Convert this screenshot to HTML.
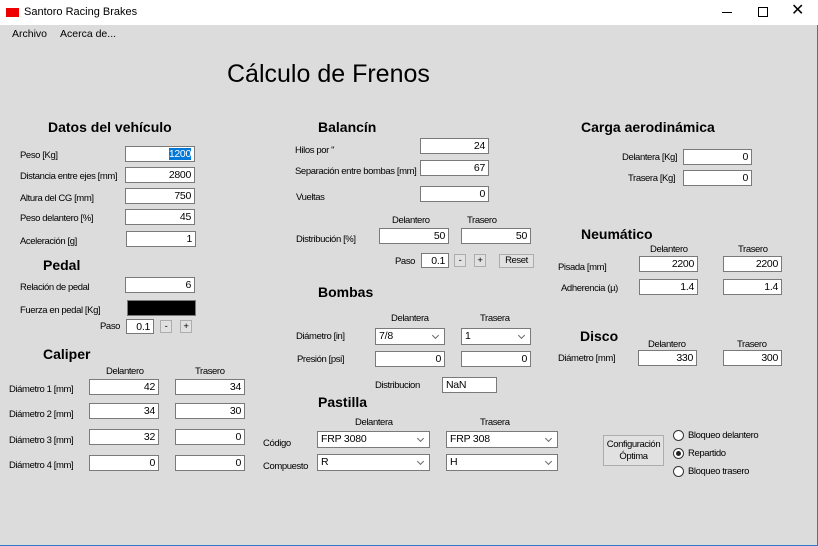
<!DOCTYPE html>
<html><head><meta charset="utf-8"><style>
*{margin:0;padding:0;box-sizing:border-box}
body{width:818px;height:546px;background:#dcdcdc;font-family:"Liberation Sans",sans-serif;font-size:9.5px;color:#000;position:relative;overflow:hidden;letter-spacing:-0.4px}
div,span{position:absolute;white-space:nowrap}
.t{line-height:12px}
.h{font-weight:bold;font-size:14px;letter-spacing:0;line-height:16px}
.i{background:#fff;border:1px solid #7a7a7a;text-align:right;padding-right:3px;font-size:10.5px;line-height:14px;letter-spacing:-0.3px}
.c{background:#fff;border:1px solid #7a7a7a;font-size:10.5px;line-height:15px;padding-left:3px;text-align:left;letter-spacing:-0.2px}
.c::after{content:"";position:absolute;right:6px;top:4px;width:4px;height:4px;border-right:1px solid #666;border-bottom:1px solid #666;transform:rotate(45deg)}
.b{background:#e1e1e1;border:1px solid #adadad;text-align:center;font-size:9.5px;line-height:12px}
.r{width:11px;height:11px;border:1px solid #333;border-radius:50%;background:#fff}
</style></head><body>
<div style="left:0;top:0;width:818px;height:25px;background:#fff"></div>
<div style="left:6px;top:8px;width:13px;height:9px;background:#e00"></div>
<div class="t" style="left:24px;top:6px;font-size:11px;letter-spacing:0">Santoro Racing Brakes</div>
<div style="left:722px;top:12px;width:10px;height:1px;background:#000"></div>
<div style="left:758px;top:7px;width:10px;height:10px;border:1px solid #000"></div>
<div style="left:791px;top:3px;font-size:16px;line-height:16px">✕</div>
<div style="left:817px;top:25px;width:1px;height:521px;background:#2b7bd0"></div>
<div style="left:0;top:545px;width:818px;height:1px;background:#2b7bd0"></div>
<div class="t" style="left:12px;top:28px;font-size:10.5px;letter-spacing:0">Archivo</div>
<div class="t" style="left:60px;top:28px;font-size:10.5px;letter-spacing:0">Acerca de...</div>
<div style="left:227px;top:59px;font-size:25px;line-height:31px;letter-spacing:0">Cálculo de Frenos</div>

<div class="h" style="left:48px;top:119px">Datos del vehículo</div>
<div class="t" style="left:20px;top:150px">Peso [Kg]</div>
<div class="t" style="left:20px;top:171px">Distancia entre ejes [mm]</div>
<div class="t" style="left:20px;top:193px">Altura del CG [mm]</div>
<div class="t" style="left:20px;top:213px">Peso delantero [%]</div>
<div class="t" style="left:20px;top:236px">Aceleración [g]</div>
<div class="i" style="left:125px;top:146px;width:70px;height:16px"><span style="position:static;background:#0078d7;color:#fff">1200</span></div>
<div class="i" style="left:125px;top:167px;width:70px;height:16px">2800</div>
<div class="i" style="left:125px;top:188px;width:70px;height:16px">750</div>
<div class="i" style="left:125px;top:209px;width:70px;height:16px">45</div>
<div class="i" style="left:126px;top:231px;width:70px;height:16px">1</div>

<div class="h" style="left:43px;top:257px">Pedal</div>
<div class="t" style="left:20px;top:282px">Relación de pedal</div>
<div class="i" style="left:125px;top:277px;width:70px;height:16px">6</div>
<div class="t" style="left:20px;top:305px">Fuerza en pedal [Kg]</div>
<div style="left:127px;top:300px;width:69px;height:16px;background:#000;border:1px solid #7a7a7a"></div>
<div class="t" style="left:100px;top:321px">Paso</div>
<div class="i" style="left:126px;top:319px;width:28px;height:15px">0.1</div>
<div class="b" style="left:160px;top:320px;width:12px;height:13px">-</div>
<div class="b" style="left:180px;top:320px;width:12px;height:13px">+</div>

<div class="h" style="left:43px;top:346px">Caliper</div>
<div class="t" style="left:106px;top:366px">Delantero</div>
<div class="t" style="left:195px;top:366px">Trasero</div>
<div class="t" style="left:9px;top:384px">Diámetro 1 [mm]</div>
<div class="t" style="left:9px;top:409px">Diámetro 2 [mm]</div>
<div class="t" style="left:9px;top:435px">Diámetro 3 [mm]</div>
<div class="t" style="left:9px;top:460px">Diámetro 4 [mm]</div>
<div class="i" style="left:89px;top:379px;width:70px;height:16px">42</div>
<div class="i" style="left:175px;top:379px;width:70px;height:16px">34</div>
<div class="i" style="left:89px;top:403px;width:70px;height:16px">34</div>
<div class="i" style="left:175px;top:403px;width:70px;height:16px">30</div>
<div class="i" style="left:89px;top:429px;width:70px;height:16px">32</div>
<div class="i" style="left:175px;top:429px;width:70px;height:16px">0</div>
<div class="i" style="left:89px;top:455px;width:70px;height:16px">0</div>
<div class="i" style="left:175px;top:455px;width:70px;height:16px">0</div>

<div class="h" style="left:318px;top:119px">Balancín</div>
<div class="t" style="left:295px;top:145px">Hilos por "</div>
<div class="t" style="left:295px;top:166px">Separación entre bombas [mm]</div>
<div class="t" style="left:296px;top:192px">Vueltas</div>
<div class="i" style="left:420px;top:138px;width:69px;height:16px">24</div>
<div class="i" style="left:420px;top:160px;width:69px;height:16px">67</div>
<div class="i" style="left:420px;top:186px;width:69px;height:16px">0</div>
<div class="t" style="left:392px;top:215px">Delantero</div>
<div class="t" style="left:467px;top:215px">Trasero</div>
<div class="t" style="left:296px;top:234px">Distribución [%]</div>
<div class="i" style="left:379px;top:228px;width:70px;height:16px">50</div>
<div class="i" style="left:461px;top:228px;width:70px;height:16px">50</div>
<div class="t" style="left:395px;top:256px">Paso</div>
<div class="i" style="left:421px;top:253px;width:28px;height:15px">0.1</div>
<div class="b" style="left:454px;top:254px;width:12px;height:13px">-</div>
<div class="b" style="left:474px;top:254px;width:12px;height:13px">+</div>
<div class="b" style="left:499px;top:254px;width:35px;height:14px">Reset</div>

<div class="h" style="left:318px;top:284px">Bombas</div>
<div class="t" style="left:391px;top:313px">Delantera</div>
<div class="t" style="left:480px;top:313px">Trasera</div>
<div class="t" style="left:296px;top:331px">Diámetro [in]</div>
<div class="c" style="left:375px;top:328px;width:70px;height:17px">7/8</div>
<div class="c" style="left:461px;top:328px;width:70px;height:17px">1</div>
<div class="t" style="left:297px;top:354px">Presión [psi]</div>
<div class="i" style="left:375px;top:351px;width:70px;height:16px">0</div>
<div class="i" style="left:461px;top:351px;width:70px;height:16px">0</div>
<div class="t" style="left:375px;top:380px">Distribucion</div>
<div class="i" style="left:442px;top:377px;width:55px;height:16px;text-align:left;padding-left:3px">NaN</div>

<div class="h" style="left:318px;top:394px">Pastilla</div>
<div class="t" style="left:355px;top:417px">Delantera</div>
<div class="t" style="left:480px;top:417px">Trasera</div>
<div class="t" style="left:263px;top:438px">Código</div>
<div class="t" style="left:263px;top:461px">Compuesto</div>
<div class="c" style="left:317px;top:431px;width:113px;height:17px">FRP 3080</div>
<div class="c" style="left:446px;top:431px;width:112px;height:17px">FRP 308</div>
<div class="c" style="left:317px;top:454px;width:113px;height:17px">R</div>
<div class="c" style="left:446px;top:454px;width:112px;height:17px">H</div>

<div class="h" style="left:581px;top:119px">Carga aerodinámica</div>
<div class="t" style="left:622px;top:152px">Delantera [Kg]</div>
<div class="t" style="left:628px;top:173px">Trasera [Kg]</div>
<div class="i" style="left:683px;top:149px;width:69px;height:16px">0</div>
<div class="i" style="left:683px;top:170px;width:69px;height:16px">0</div>

<div class="h" style="left:581px;top:226px">Neumático</div>
<div class="t" style="left:650px;top:244px">Delantero</div>
<div class="t" style="left:738px;top:244px">Trasero</div>
<div class="t" style="left:558px;top:262px">Pisada [mm]</div>
<div class="t" style="left:561px;top:283px">Adherencia (µ)</div>
<div class="i" style="left:639px;top:256px;width:59px;height:16px">2200</div>
<div class="i" style="left:723px;top:256px;width:59px;height:16px">2200</div>
<div class="i" style="left:639px;top:279px;width:59px;height:16px">1.4</div>
<div class="i" style="left:723px;top:279px;width:59px;height:16px">1.4</div>

<div class="h" style="left:580px;top:328px">Disco</div>
<div class="t" style="left:648px;top:339px">Delantero</div>
<div class="t" style="left:737px;top:339px">Trasero</div>
<div class="t" style="left:558px;top:353px">Diámetro [mm]</div>
<div class="i" style="left:638px;top:350px;width:59px;height:16px">330</div>
<div class="i" style="left:723px;top:350px;width:59px;height:16px">300</div>

<div class="b" style="left:603px;top:435px;width:61px;height:31px;padding-top:3px">Configuración<br>Óptima</div>
<div class="r" style="left:673px;top:430px"></div>
<div class="t" style="left:688px;top:430px">Bloqueo delantero</div>
<div class="r" style="left:673px;top:448px"><div style="left:2px;top:2px;width:5px;height:5px;border-radius:50%;background:#222"></div></div>
<div class="t" style="left:688px;top:448px">Repartido</div>
<div class="r" style="left:673px;top:466px"></div>
<div class="t" style="left:688px;top:466px">Bloqueo trasero</div>
</body></html>
